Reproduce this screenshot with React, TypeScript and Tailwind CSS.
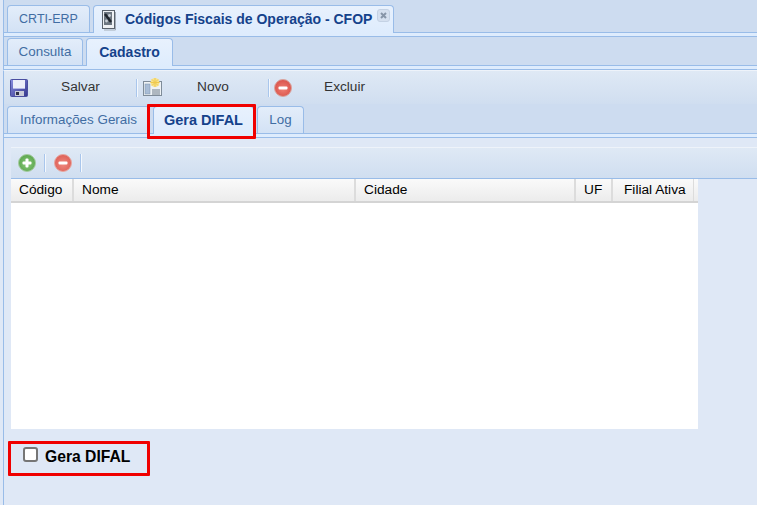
const FONT = "font-['Liberation_Sans',Arial,sans-serif]"

function Tab({ label, active, width, text, icon, close }: { label: string; active?: boolean; width: string; text?: string; icon?: React.ReactNode; close?: React.ReactNode }) {
  return (
    <div
      className={`flex items-center justify-center rounded-t-[4px] border border-b-0 border-[#99bce8] ${text ?? 'text-[13.4px]'} ${width} ${
        active
          ? 'relative z-10 -mb-px bg-gradient-to-b from-[#e8f1fd] to-[#deecfd] font-bold text-[#15428b]'
          : 'bg-gradient-to-b from-[#e3edfa] to-[#d3e2f5] text-[#416da3]'
      }`}
    >
      {icon}
      {label}
      {close}
    </div>
  )
}

function DocIcon() {
  return (
    <svg width="16" height="22" viewBox="0 0 16 22" className="mr-[8px] shrink-0">
      <rect x="1.5" y="1.5" width="12" height="18" fill="#eef1f4" stroke="#59626c" />
      <rect x="3" y="3" width="8" height="13" fill="#6c7680" />
      <path d="M4 5l6 8" stroke="#1f262d" strokeWidth="2.4" />
      <circle cx="8.5" cy="6.5" r="1.4" fill="#c9d0d6" />
      <circle cx="5.5" cy="12" r="1.4" fill="#c9d0d6" />
      <path d="M14.5 3v18H3" fill="none" stroke="#a3adb8" />
    </svg>
  )
}

function CloseIcon() {
  return (
    <div className="ml-[5px] mb-[8px] flex h-[13px] w-[13px] shrink-0 items-center justify-center rounded-[3px] border border-[#c4d2e4] bg-[#d5e0ef]">
      <svg width="9" height="9" viewBox="0 0 9 9">
        <path d="M2 2l5 5M7 2L2 7" stroke="#8795a8" strokeWidth="2" />
      </svg>
    </div>
  )
}

function Separator() {
  return <div className="h-[18px] w-[2px] border-l border-[#a9c6ec] bg-[#f4f8fd]" />
}

function SaveIcon() {
  return (
    <svg width="18" height="18" viewBox="0 0 18 18">
      <defs>
        <linearGradient id="disk" x1="0" y1="0" x2="1" y2="1">
          <stop offset="0" stopColor="#8a8ee0" />
          <stop offset="1" stopColor="#33368c" />
        </linearGradient>
      </defs>
      <rect x="0.5" y="0.5" width="17" height="17" rx="1" fill="url(#disk)" stroke="#4a4ea0" />
      <rect x="3" y="1" width="12" height="8" fill="#eceef9" />
      <rect x="3" y="9" width="12" height="1" fill="#b3b7e6" />
      <rect x="5" y="12" width="9" height="5" fill="#c9cbd9" />
      <rect x="6" y="13" width="3" height="3" fill="#2f3048" />
    </svg>
  )
}

function NewIcon() {
  return (
    <svg width="20" height="19" viewBox="0 0 20 19">
      <rect x="0.5" y="3.5" width="18" height="14" fill="#eef2f5" stroke="#7f8c99" />
      <rect x="2" y="6" width="5" height="10" fill="#a9bdd6" stroke="#7d93ad" strokeWidth="0.5" />
      <path d="M9 12h8M9 14h8M9 16h8" stroke="#6f7c8a" />
      <circle cx="12" cy="4.5" r="4.5" fill="#f7e28c" />
      <path d="M12 0v9M7.5 4.5h9M9 1.5l6 6M15 1.5l-6 6" stroke="#efc94d" />
    </svg>
  )
}

function RoundIcon({ id, from, to, edge, plus }: { id: string; from: string; to: string; edge: string; plus?: boolean }) {
  return (
    <svg width="18" height="18" viewBox="0 0 18 18">
      <defs>
        <radialGradient id={id} cx="0.5" cy="0.55" r="0.55">
          <stop offset="0" stopColor={from} />
          <stop offset="1" stopColor={to} />
        </radialGradient>
      </defs>
      <circle cx="9" cy="9" r="8.5" fill={`url(#${id})`} stroke={edge} />
      <rect x="4.5" y="7.5" width="9" height="3" rx="1" fill="#fff" />
      {plus && <rect x="7.5" y="4.5" width="3" height="9" rx="1" fill="#fff" />}
    </svg>
  )
}

function HeaderCell({ label, width }: { label: string; width: string }) {
  return (
    <div className={`flex h-full shrink-0 items-center pl-[8px] ${width} border-r-2 border-[#dcdcdc]`}>
      {label}
    </div>
  )
}

function Strip() {
  return <div className="ml-[3px] h-[5px] shrink-0 border-y border-l border-[#99bce8] bg-[#deecfd]" />
}

export default function App() {
  return (
    <div className={`${FONT} relative flex h-[505px] w-[757px] flex-col overflow-hidden bg-[#dfe8f6]`}>
      <div className="ml-[3px] flex h-[32px] shrink-0 items-stretch gap-[3px] border-l border-[#99bce8] bg-[#cddcf0] pl-[3px] pt-[5px]">
        <Tab label="CRTI-ERP" width="w-[83px]" text="text-[12.5px]" />
        <Tab
          label="Códigos Fiscais de Operação - CFOP"
          active
          width="w-[301px] !justify-start pl-[7px]"
          text="text-[14px]"
          icon={<DocIcon />}
          close={<CloseIcon />}
        />
      </div>
      <Strip />

      <div className="ml-[3px] flex h-[28px] shrink-0 items-stretch gap-[3px] border-l border-[#99bce8] bg-[#cddcf0] pl-[3px] pt-[1px]">
        <Tab label="Consulta" width="w-[76px]" />
        <Tab label="Cadastro" active width="w-[87px]" text="text-[14px]" />
      </div>
      <Strip />

      <div className="ml-[3px] flex h-[34px] shrink-0 items-center border-l border-t border-[#99bce8] border-t-[#eef3fa] bg-gradient-to-b from-[#dfe9f5] to-[#d0def0] pl-[6px] text-[13.7px] text-[#333]">
        <SaveIcon />
        <span className="ml-[33px] w-[75px]">Salvar</span>
        <Separator />
        <span className="ml-[5px]"><NewIcon /></span>
        <span className="ml-[34px] w-[40px]">Novo</span>
        <span className="ml-[31px]"><Separator /></span>
        <span className="ml-[4px]"><RoundIcon id="del-top" from="#ef8074" to="#d9524a" edge="#d9a49e" /></span>
        <span className="ml-[32px]">Excluir</span>
      </div>

      <div className="ml-[3px] flex h-[29px] shrink-0 items-stretch gap-[3px] border-l border-[#99bce8] bg-[#cddcf0] pl-[3px] pt-[2px]">
        <Tab label="Informações Gerais" width="w-[143px]" />
        <Tab label="Gera DIFAL" active width="w-[101px]" text="text-[14.5px]" />
        <Tab label="Log" width="w-[47px]" />
      </div>
      <Strip />

      <div className="ml-[3px] flex min-h-0 flex-1 flex-col border-l border-[#99bce8] pl-[7px] pt-[9px]">
        <div className="flex h-[32px] shrink-0 items-center gap-[8px] border-b border-t border-b-[#99bce8] border-t-[#eef3fa] bg-gradient-to-b from-[#dfe9f5] to-[#d0def0] pl-[7px]">
          <RoundIcon id="add" from="#8ccb7c" to="#5aa54c" edge="#a5cba0" plus />
          <Separator />
          <RoundIcon id="del" from="#f08a80" to="#dd5f56" edge="#e7a7a0" />
          <Separator />
        </div>
        <div className="flex h-[24px] w-[687px] shrink-0 items-center border-b-2 border-[#d4d4d4] bg-gradient-to-b from-[#fafafa] to-[#ececec] text-[13.7px] text-black">
          <HeaderCell label="Código" width="w-[63px]" />
          <HeaderCell label="Nome" width="w-[282px]" />
          <HeaderCell label="Cidade" width="w-[220px]" />
          <HeaderCell label="UF" width="w-[37px]" />
          <div className="flex h-full w-[81px] shrink-0 items-center border-r border-[#dcdcdc] pl-[11px]">Filial Ativa</div>
        </div>
        <div className="h-[226px] w-[687px] shrink-0 bg-white" />
        <label className="ml-[-3px] mt-[12px] flex h-[35px] w-[142px] items-start rounded-[1px] border-[3px] border-[#f00000] pl-[12px] text-[15.7px] font-bold text-black">
          <span className="mt-[3px] h-[15px] w-[15px] shrink-0 rounded-[3px] border-2 border-[#767676] bg-white" />
          <span className="ml-[7px] mt-[1px]">Gera DIFAL</span>
        </label>
      </div>

      <div className="pointer-events-none absolute left-[147px] top-[104px] z-20 h-[35px] w-[109px] rounded-[1px] border-[3px] border-[#f00000]" />
    </div>
  )
}
